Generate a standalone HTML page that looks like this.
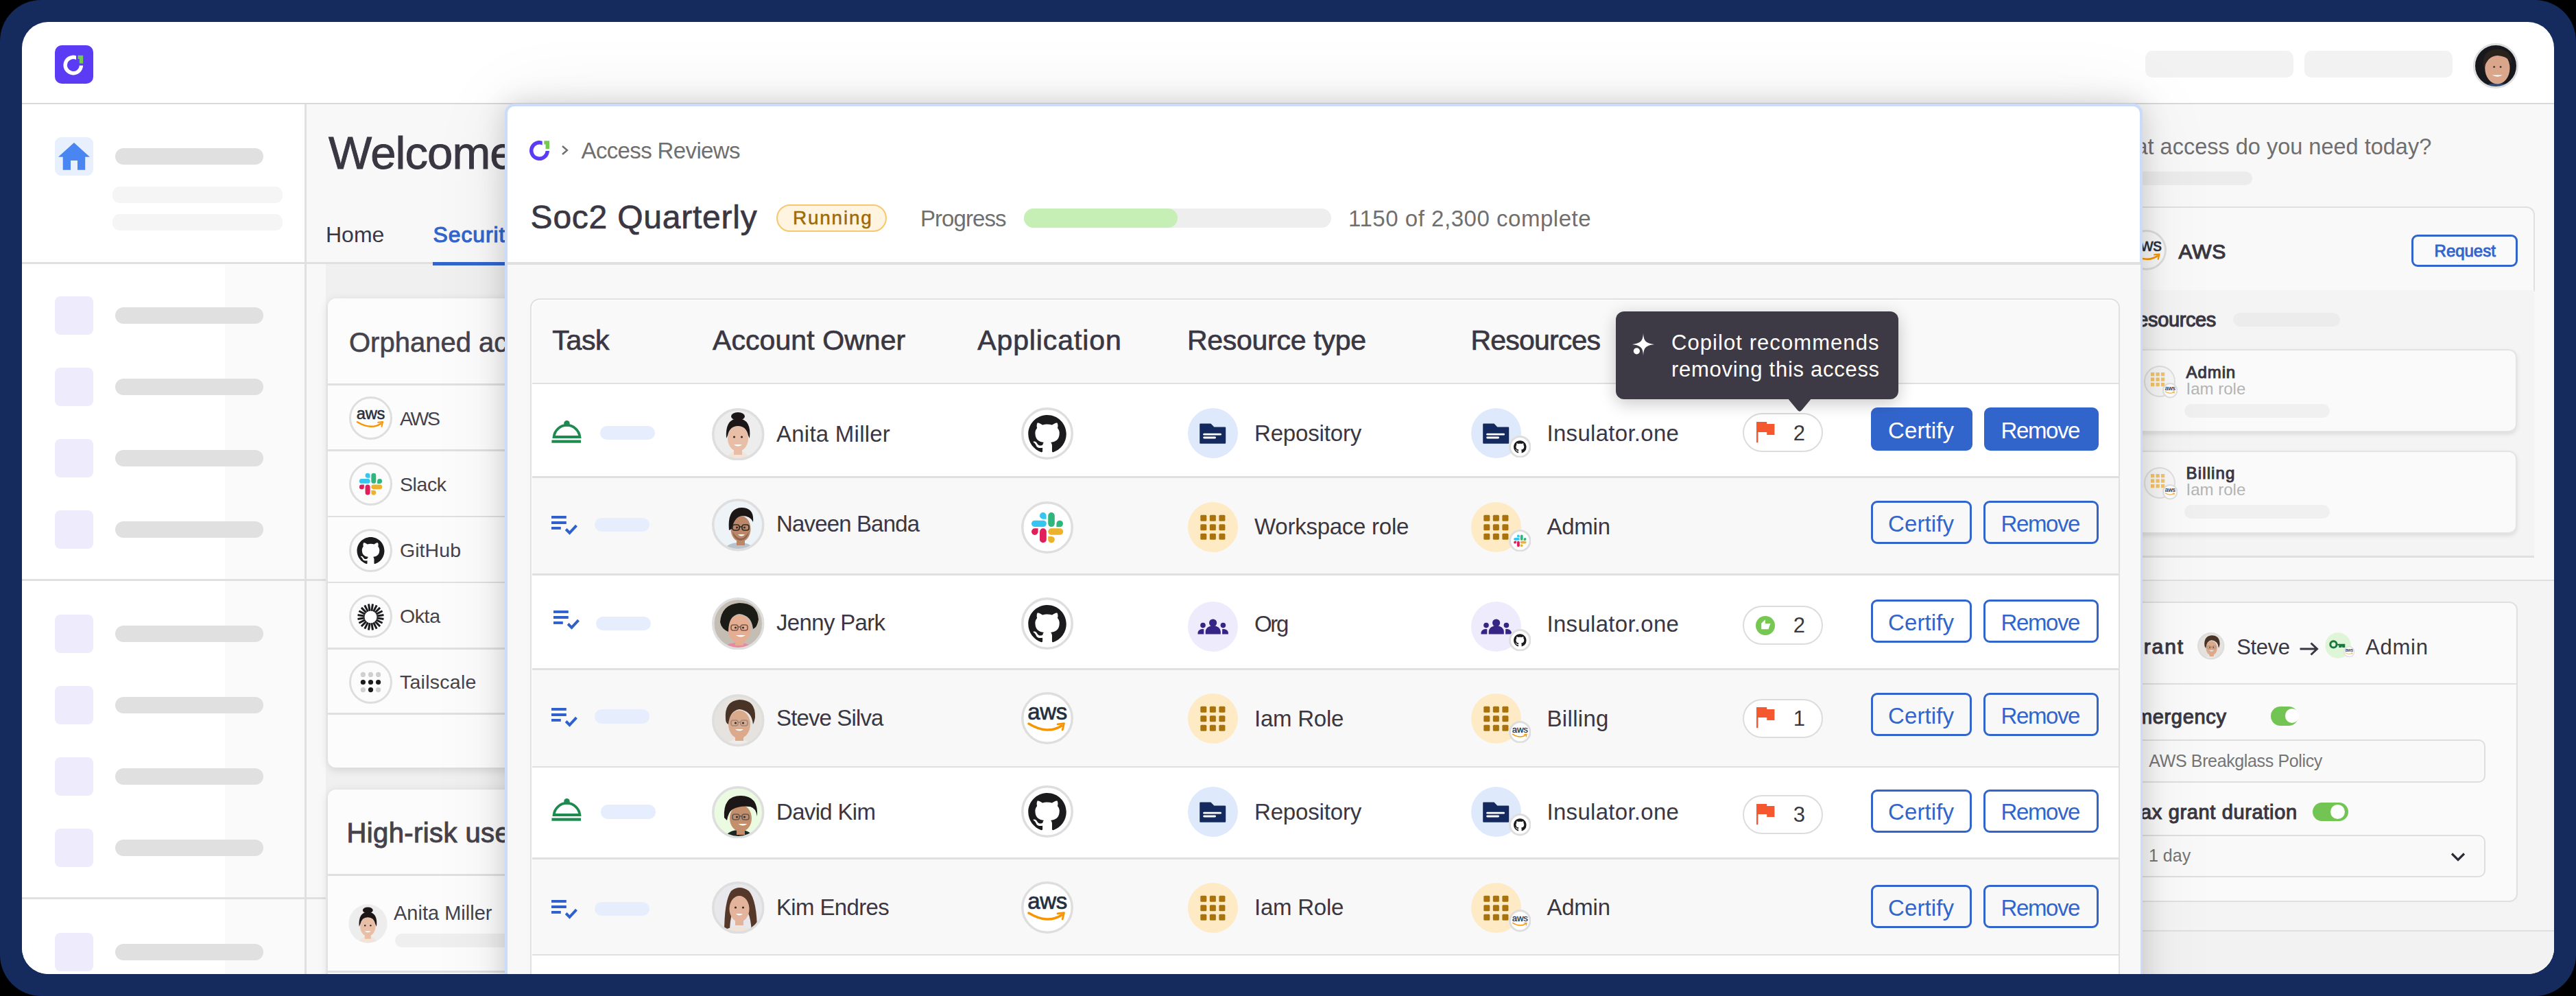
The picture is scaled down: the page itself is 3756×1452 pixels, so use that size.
<!DOCTYPE html><html><head><meta charset="utf-8"><style>
*{margin:0;padding:0;box-sizing:border-box}
html,body{width:3756px;height:1452px;overflow:hidden;background:#000}
body{position:relative;font-family:"Liberation Sans",sans-serif}
div{position:absolute}
.t{white-space:nowrap;line-height:1}
</style></head><body>
<div style="left:0;top:0;width:3756px;height:1452px;background:#152b5d;border-radius:60px"></div>
<div style="left:32px;top:32px;width:3692px;height:1388px;border-radius:38px;overflow:hidden;background:#fff"><div style="left:-32px;top:-32px;width:3756px;height:1452px">
<svg style="position:absolute;left:80.0px;top:65.5px;" width="56.0" height="56.0" viewBox="0 0 56 56"><rect x="0" y="0" width="56" height="56" rx="10" fill="#5b3bf4"/><path d="M31.00,15.23 L31.00,21.10 A8.95,8.95 0 1 0 35.73,29.60 L41.19,29.60 A14.4,14.4 0 1 1 31.00,15.23 Z" fill="#fff"/><path d="M33.6,14.8 H41.2 V26.4 H35.8 V20 H33.6 Z" fill="#74c94f"/></svg>
<div style="left:32.0px;top:149.5px;width:3692.0px;height:3.0px;background:#d9d9d9"></div>
<div style="left:3128.0px;top:74.0px;width:216.0px;height:39.0px;background:#f2f2f2;border-radius:10px"></div>
<div style="left:3360.0px;top:74.0px;width:216.0px;height:39.0px;background:#f2f2f2;border-radius:10px"></div>
<div style="left:32.0px;top:152.0px;width:413.0px;height:1268.0px;background:#fff"></div>
<div style="left:328.0px;top:386.0px;width:117.0px;height:1034.0px;background:#fafafa"></div>
<div style="left:444.0px;top:152.0px;width:3.0px;height:1268.0px;background:#e0e0e0"></div>
<div style="left:80.0px;top:200.0px;width:56.0px;height:56.0px;background:#e8effd;border-radius:9px"></div>
<svg style="position:absolute;left:80.0px;top:200.0px;" width="56.0" height="56.0" viewBox="0 0 56 56"><path d="M27.9,7.9 L50.9,28.8 H44.2 V47.7 H33 V33.9 H23 V47.7 H11.7 V28.8 H5 Z" fill="#4a86f2"/></svg>
<div style="left:168.0px;top:216.0px;width:216.0px;height:24.0px;background:#e0e0e0;border-radius:12px"></div>
<div style="left:164.0px;top:272.0px;width:248.0px;height:24.0px;background:#f5f5f5;border-radius:10px"></div>
<div style="left:164.0px;top:312.0px;width:248.0px;height:24.0px;background:#f5f5f5;border-radius:10px"></div>
<div style="left:32.0px;top:381.5px;width:413.0px;height:3.0px;background:#e0e0e0"></div>
<div style="left:80.0px;top:432.0px;width:56.0px;height:56.0px;background:#eeebfc;border-radius:8px"></div>
<div style="left:168.0px;top:448.0px;width:216.0px;height:24.0px;background:#e0e0e0;border-radius:12px"></div>
<div style="left:80.0px;top:536.0px;width:56.0px;height:56.0px;background:#eeebfc;border-radius:8px"></div>
<div style="left:168.0px;top:552.0px;width:216.0px;height:24.0px;background:#e0e0e0;border-radius:12px"></div>
<div style="left:80.0px;top:640.0px;width:56.0px;height:56.0px;background:#eeebfc;border-radius:8px"></div>
<div style="left:168.0px;top:656.0px;width:216.0px;height:24.0px;background:#e0e0e0;border-radius:12px"></div>
<div style="left:80.0px;top:744.0px;width:56.0px;height:56.0px;background:#eeebfc;border-radius:8px"></div>
<div style="left:168.0px;top:760.0px;width:216.0px;height:24.0px;background:#e0e0e0;border-radius:12px"></div>
<div style="left:80.0px;top:896.0px;width:56.0px;height:56.0px;background:#eeebfc;border-radius:8px"></div>
<div style="left:168.0px;top:912.0px;width:216.0px;height:24.0px;background:#e0e0e0;border-radius:12px"></div>
<div style="left:80.0px;top:1000.0px;width:56.0px;height:56.0px;background:#eeebfc;border-radius:8px"></div>
<div style="left:168.0px;top:1016.0px;width:216.0px;height:24.0px;background:#e0e0e0;border-radius:12px"></div>
<div style="left:80.0px;top:1104.0px;width:56.0px;height:56.0px;background:#eeebfc;border-radius:8px"></div>
<div style="left:168.0px;top:1120.0px;width:216.0px;height:24.0px;background:#e0e0e0;border-radius:12px"></div>
<div style="left:80.0px;top:1208.0px;width:56.0px;height:56.0px;background:#eeebfc;border-radius:8px"></div>
<div style="left:168.0px;top:1224.0px;width:216.0px;height:24.0px;background:#e0e0e0;border-radius:12px"></div>
<div style="left:80.0px;top:1360.0px;width:56.0px;height:56.0px;background:#eeebfc;border-radius:8px"></div>
<div style="left:168.0px;top:1376.0px;width:216.0px;height:24.0px;background:#e0e0e0;border-radius:12px"></div>
<div style="left:447.0px;top:152.0px;width:700.0px;height:231.0px;background:#f8f8f8"></div>
<div style="left:447.0px;top:383.0px;width:700.0px;height:1037.0px;background:#f0f0f0"></div>
<div style="left:447.0px;top:383.0px;width:28.0px;height:1037.0px;background:#f8f8f8"></div>
<div style="left:447.0px;top:382.0px;width:700.0px;height:3.0px;background:#e0e0e0"></div>
<div style="left:32.0px;top:844.0px;width:443.0px;height:3.0px;background:#e0e0e0"></div>
<div style="left:32.0px;top:1308.0px;width:443.0px;height:3.0px;background:#e0e0e0"></div>
<div class="t" style="left:479.0px;top:189.1px;font-size:67px;color:#3a3742;letter-spacing:-0.90px;-webkit-text-stroke:0.9px #3a3742;">Welcome</div>
<div class="t" style="left:475.0px;top:325.6px;font-size:32px;color:#3a3742;">Home</div>
<div class="t" style="left:631.5px;top:325.6px;font-size:32px;color:#3265cc;letter-spacing:0.90px;-webkit-text-stroke:1.1px #3265cc;">Security</div>
<div style="left:631.0px;top:382.0px;width:120.0px;height:4.5px;background:#3265cc"></div>
<div style="left:478.0px;top:435.0px;width:400.0px;height:684.0px;background:#fcfcfc;border-radius:12px;box-shadow:0 3px 14px rgba(0,0,0,0.13)"></div>
<div class="t" style="left:509.0px;top:478.6px;font-size:40px;color:#45424c;-webkit-text-stroke:0.6px #45424c;">Orphaned access</div>
<div style="left:478.0px;top:559.0px;width:400.0px;height:2.5px;background:#e0e0e0"></div>
<div style="left:478.0px;top:655.3px;width:400.0px;height:2.5px;background:#e0e0e0"></div>
<div style="left:478.0px;top:751.8px;width:400.0px;height:2.5px;background:#e0e0e0"></div>
<div style="left:478.0px;top:847.6px;width:400.0px;height:2.5px;background:#e0e0e0"></div>
<div style="left:478.0px;top:944.0px;width:400.0px;height:2.5px;background:#e0e0e0"></div>
<div style="left:478.0px;top:1039.3px;width:400.0px;height:2.5px;background:#e0e0e0"></div>
<svg style="position:absolute;left:508.5px;top:577.8px;" width="63.0" height="63.0" viewBox="0 0 63 63"><circle cx="31.5" cy="31.5" r="30.0" fill="#fcfcfc" stroke="#dedede" stroke-width="3"/><g transform="translate(31.50,28.98) scale(0.7200)"><text x="0" y="5" text-anchor="middle" font-family="Liberation Sans" font-size="33" fill="#232f3e" stroke="#232f3e" stroke-width="0.7" letter-spacing="-0.4">aws</text><path d="M-27,11.5 Q0,28 21,14.5" stroke="#f79400" stroke-width="3.4" fill="none" stroke-linecap="round"/><path d="M15,12.3 L24.5,11.2 L22.2,20.5" stroke="#f79400" stroke-width="2.8" fill="none" stroke-linecap="round" stroke-linejoin="round"/></g></svg>
<div class="t" style="left:583.0px;top:595.9px;font-size:28.5px;color:#45424c;letter-spacing:-2.45px;">AWS</div>
<svg style="position:absolute;left:508.5px;top:674.3px;" width="63.0" height="63.0" viewBox="0 0 63 63"><circle cx="31.5" cy="31.5" r="30.0" fill="#fcfcfc" stroke="#dedede" stroke-width="3"/><g transform="translate(14.94,15.44) scale(0.7200)"><path d="M16.8,0.4 A4.8,4.8 0 0 1 21.6,5.2 V10.0 H16.8 A4.8,4.8 0 0 1 12,5.2 A4.8,4.8 0 0 1 16.8,0.4 Z" fill="#36c5f0"/><rect x="0" y="12" width="21.8" height="9.4" rx="4.7" fill="#36c5f0"/><rect x="24.2" y="0.4" width="9.6" height="21" rx="4.8" fill="#2eb67d"/><path d="M41.199999999999996,12 A4.8,4.8 0 0 1 46.0,16.8 A4.8,4.8 0 0 1 41.199999999999996,21.6 H36.4 V16.8 A4.8,4.8 0 0 1 41.199999999999996,12 Z" fill="#2eb67d"/><path d="M4.8,23.6 H9.6 V28.400000000000002 A4.8,4.8 0 0 1 4.8,33.2 A4.8,4.8 0 0 1 0,28.400000000000002 A4.8,4.8 0 0 1 4.8,23.6 Z" fill="#e01e5a"/><rect x="12" y="23.6" width="9.8" height="21" rx="4.9" fill="#e01e5a"/><rect x="24.2" y="23.6" width="22" height="9.4" rx="4.7" fill="#ecb22e"/><path d="M24.2,35.2 H29.0 A4.8,4.8 0 0 1 33.8,40.0 A4.8,4.8 0 0 1 29.0,44.800000000000004 A4.8,4.8 0 0 1 24.2,40.0 Z" fill="#ecb22e"/></g></svg>
<div class="t" style="left:583.0px;top:691.9px;font-size:28.5px;color:#45424c;letter-spacing:-0.43px;">Slack</div>
<svg style="position:absolute;left:508.5px;top:770.5px;" width="63.0" height="63.0" viewBox="0 0 63 63"><circle cx="31.5" cy="31.5" r="30.0" fill="#fcfcfc" stroke="#dedede" stroke-width="3"/><g transform="translate(11.52,12.10) scale(2.4975)"><path d="M8 0C3.58 0 0 3.58 0 8c0 3.54 2.29 6.53 5.47 7.59.4.07.55-.17.55-.38 0-.19-.01-.82-.01-1.49-2.01.37-2.53-.49-2.69-.94-.09-.23-.48-.94-.82-1.13-.28-.15-.68-.52-.01-.53.63-.01 1.08.58 1.23.82.72 1.21 1.87.87 2.33.66.07-.52.28-.87.51-1.07-1.78-.2-3.64-.89-3.64-3.95 0-.87.31-1.59.82-2.15-.08-.2-.36-1.02.08-2.12 0 0 .67-.21 2.2.82.64-.18 1.32-.27 2-.27.68 0 1.36.09 2 .27 1.53-1.04 2.2-.82 2.2-.82.44 1.1.16 1.92.08 2.12.51.56.82 1.27.82 2.15 0 3.07-1.87 3.75-3.65 3.95.29.25.54.73.54 1.48 0 1.07-.01 1.93-.01 2.2 0 .21.15.46.55.38A8.013 8.013 0 0016 8c0-4.42-3.58-8-8-8z" fill="#1b1a1d"/></g></svg>
<div class="t" style="left:583.0px;top:788.4px;font-size:28.5px;color:#45424c;letter-spacing:0.06px;">GitHub</div>
<svg style="position:absolute;left:508.5px;top:867.1px;" width="63.0" height="63.0" viewBox="0 0 63 63"><circle cx="31.5" cy="31.5" r="30.0" fill="#fcfcfc" stroke="#dedede" stroke-width="3"/><line x1="30.17" y1="40.90" x2="28.50" y2="51.46" stroke="#1b1a1d" stroke-width="3"/><line x1="27.64" y1="40.07" x2="22.78" y2="49.61" stroke="#1b1a1d" stroke-width="3"/><line x1="25.49" y1="38.51" x2="17.92" y2="46.08" stroke="#1b1a1d" stroke-width="3"/><line x1="23.93" y1="36.36" x2="14.39" y2="41.22" stroke="#1b1a1d" stroke-width="3"/><line x1="23.10" y1="33.83" x2="12.54" y2="35.50" stroke="#1b1a1d" stroke-width="3"/><line x1="23.10" y1="31.17" x2="12.54" y2="29.50" stroke="#1b1a1d" stroke-width="3"/><line x1="23.93" y1="28.64" x2="14.39" y2="23.78" stroke="#1b1a1d" stroke-width="3"/><line x1="25.49" y1="26.49" x2="17.92" y2="18.92" stroke="#1b1a1d" stroke-width="3"/><line x1="27.64" y1="24.93" x2="22.78" y2="15.39" stroke="#1b1a1d" stroke-width="3"/><line x1="30.17" y1="24.10" x2="28.50" y2="13.54" stroke="#1b1a1d" stroke-width="3"/><line x1="32.83" y1="24.10" x2="34.50" y2="13.54" stroke="#1b1a1d" stroke-width="3"/><line x1="35.36" y1="24.93" x2="40.22" y2="15.39" stroke="#1b1a1d" stroke-width="3"/><line x1="37.51" y1="26.49" x2="45.08" y2="18.92" stroke="#1b1a1d" stroke-width="3"/><line x1="39.07" y1="28.64" x2="48.61" y2="23.78" stroke="#1b1a1d" stroke-width="3"/><line x1="39.90" y1="31.17" x2="50.46" y2="29.50" stroke="#1b1a1d" stroke-width="3"/><line x1="39.90" y1="33.83" x2="50.46" y2="35.50" stroke="#1b1a1d" stroke-width="3"/><line x1="39.07" y1="36.36" x2="48.61" y2="41.22" stroke="#1b1a1d" stroke-width="3"/><line x1="37.51" y1="38.51" x2="45.08" y2="46.08" stroke="#1b1a1d" stroke-width="3"/><line x1="35.36" y1="40.07" x2="40.22" y2="49.61" stroke="#1b1a1d" stroke-width="3"/><line x1="32.83" y1="40.90" x2="34.50" y2="51.46" stroke="#1b1a1d" stroke-width="3"/><circle cx="31.5" cy="32.5" r="9" fill="#fff"/></svg>
<div class="t" style="left:583.0px;top:883.6px;font-size:28.5px;color:#45424c;letter-spacing:-0.40px;">Okta</div>
<svg style="position:absolute;left:508.5px;top:962.6px;" width="63.0" height="63.0" viewBox="0 0 63 63"><circle cx="31.5" cy="31.5" r="30.0" fill="#fcfcfc" stroke="#dedede" stroke-width="3"/><circle cx="20.40" cy="20.40" r="3.6" fill="#cfcfcf"/><circle cx="31.50" cy="20.40" r="3.6" fill="#cfcfcf"/><circle cx="42.60" cy="20.40" r="3.6" fill="#cfcfcf"/><circle cx="20.40" cy="31.50" r="3.6" fill="#1b1a1d"/><circle cx="31.50" cy="31.50" r="3.6" fill="#1b1a1d"/><circle cx="42.60" cy="31.50" r="3.6" fill="#1b1a1d"/><circle cx="20.40" cy="42.60" r="3.6" fill="#cfcfcf"/><circle cx="31.50" cy="42.60" r="3.6" fill="#1b1a1d"/><circle cx="42.60" cy="42.60" r="3.6" fill="#cfcfcf"/></svg>
<div class="t" style="left:583.0px;top:979.9px;font-size:28.5px;color:#45424c;letter-spacing:0.26px;">Tailscale</div>
<div style="left:478.0px;top:1151.0px;width:400.0px;height:300.0px;background:#fcfcfc;border-radius:12px;box-shadow:0 3px 14px rgba(0,0,0,0.13)"></div>
<div class="t" style="left:505.5px;top:1193.6px;font-size:40px;color:#45424c;letter-spacing:0.40px;-webkit-text-stroke:1.0px #45424c;">High-risk users</div>
<div style="left:478.0px;top:1274.0px;width:400.0px;height:2.5px;background:#e0e0e0"></div>
<div style="left:576.0px;top:1361.0px;width:300.0px;height:20.0px;background:#efefef;border-radius:10px"></div>
<div class="t" style="left:574.0px;top:1316.5px;font-size:29px;color:#45424c;">Anita Miller</div>
<div style="left:478.0px;top:1415.0px;width:400.0px;height:2.5px;background:#e0e0e0"></div>
<div style="left:3100.0px;top:152.0px;width:624.0px;height:1268.0px;background:#f8f8f8"></div>
<div class="t" style="left:3064.7px;top:198.3px;font-size:32.5px;color:#6f6f6f;">What access do you need today?</div>
<div style="left:3050.0px;top:250.0px;width:234.0px;height:20.0px;background:#ececec;border-radius:10px"></div>
<div style="left:3050.0px;top:300.5px;width:645.5px;height:124.0px;background:#f9f9f9;border:2.5px solid #e0e0e0;border-radius:0 12px 0 0"></div>
<svg style="position:absolute;left:3099.5px;top:334.5px;" width="59.0" height="59.0" viewBox="0 0 59 59"><circle cx="29.5" cy="29.5" r="28.0" fill="#f9f9f9" stroke="#dedede" stroke-width="3"/><g transform="translate(29.50,26.78) scale(0.7763)"><text x="0" y="5" text-anchor="middle" font-family="Liberation Sans" font-size="33" fill="#232f3e" stroke="#232f3e" stroke-width="0.7" letter-spacing="-0.4">aws</text><path d="M-27,11.5 Q0,28 21,14.5" stroke="#f79400" stroke-width="3.4" fill="none" stroke-linecap="round"/><path d="M15,12.3 L24.5,11.2 L22.2,20.5" stroke="#f79400" stroke-width="2.8" fill="none" stroke-linecap="round" stroke-linejoin="round"/></g></svg>
<div class="t" style="left:3176.6px;top:352.2px;font-size:30px;color:#3a3742;letter-spacing:0.75px;-webkit-text-stroke:1.2px #3a3742;">AWS</div>
<div style="left:3516.4px;top:342.2px;width:155.0px;height:47.0px;border:3px solid #3265cc;border-radius:9px;background:#fafafa"></div>
<div class="t" style="left:3549.6px;top:353.7px;font-size:24px;color:#3265cc;letter-spacing:-0.03px;-webkit-text-stroke:0.9px #3265cc;">Request</div>
<div style="left:3050.0px;top:423.0px;width:644.5px;height:388.0px;background:#f4f4f4"></div>
<div class="t" style="left:3095.8px;top:452.0px;font-size:29px;color:#3a3742;letter-spacing:-0.40px;-webkit-text-stroke:1.1px #3a3742;">Resources</div>
<div style="left:3256.0px;top:456.2px;width:155.6px;height:20.0px;background:#ececec;border-radius:10px"></div>
<div style="left:3050.0px;top:509.3px;width:620.0px;height:121.0px;background:#fafafa;border:2px solid #e4e4e4;border-radius:12px;box-shadow:0 3px 6px rgba(0,0,0,0.10)"></div>
<svg style="position:absolute;left:3125.7px;top:532.7px;" width="46.0" height="46.0" viewBox="0 0 46 46"><circle cx="23" cy="23" r="22" fill="#f7f7f7" stroke="#e0e0e0" stroke-width="2"/><rect x="10.0" y="10.0" width="5.2" height="5.2" fill="#f5c46b"/><rect x="10.0" y="17.5" width="5.2" height="5.2" fill="#f5c46b"/><rect x="10.0" y="25.0" width="5.2" height="5.2" fill="#f5c46b"/><rect x="17.5" y="10.0" width="5.2" height="5.2" fill="#f5c46b"/><rect x="17.5" y="17.5" width="5.2" height="5.2" fill="#f5c46b"/><rect x="17.5" y="25.0" width="5.2" height="5.2" fill="#f5c46b"/><rect x="25.0" y="10.0" width="5.2" height="5.2" fill="#f5c46b"/><rect x="25.0" y="17.5" width="5.2" height="5.2" fill="#f5c46b"/><rect x="25.0" y="25.0" width="5.2" height="5.2" fill="#f5c46b"/></svg>
<svg style="position:absolute;left:3153.0px;top:558.3px;" width="22.4" height="22.4" viewBox="0 0 22.4 22.4"><circle cx="11.2" cy="11.2" r="10.2" fill="#fff" stroke="#e0e0e0" stroke-width="2"/><g transform="translate(11.20,10.00) scale(0.2600)"><text x="0" y="5" text-anchor="middle" font-family="Liberation Sans" font-size="33" fill="#232f3e" stroke="#232f3e" stroke-width="0.7" letter-spacing="-0.4">aws</text><path d="M-27,11.5 Q0,28 21,14.5" stroke="#f79400" stroke-width="3.4" fill="none" stroke-linecap="round"/><path d="M15,12.3 L24.5,11.2 L22.2,20.5" stroke="#f79400" stroke-width="2.8" fill="none" stroke-linecap="round" stroke-linejoin="round"/></g></svg>
<div class="t" style="left:3187.6px;top:530.9px;font-size:24px;color:#3a3742;letter-spacing:0.90px;-webkit-text-stroke:1.0px #3a3742;">Admin</div>
<div class="t" style="left:3187.6px;top:555.2px;font-size:24px;color:#b4b4b4;">Iam role</div>
<div style="left:3185.4px;top:588.8px;width:212.0px;height:20.0px;background:#f0f0f0;border-radius:10px"></div>
<div style="left:3050.0px;top:657.3px;width:620.0px;height:121.0px;background:#fafafa;border:2px solid #e4e4e4;border-radius:12px;box-shadow:0 3px 6px rgba(0,0,0,0.10)"></div>
<svg style="position:absolute;left:3125.7px;top:680.7px;" width="46.0" height="46.0" viewBox="0 0 46 46"><circle cx="23" cy="23" r="22" fill="#f7f7f7" stroke="#e0e0e0" stroke-width="2"/><rect x="10.0" y="10.0" width="5.2" height="5.2" fill="#f5c46b"/><rect x="10.0" y="17.5" width="5.2" height="5.2" fill="#f5c46b"/><rect x="10.0" y="25.0" width="5.2" height="5.2" fill="#f5c46b"/><rect x="17.5" y="10.0" width="5.2" height="5.2" fill="#f5c46b"/><rect x="17.5" y="17.5" width="5.2" height="5.2" fill="#f5c46b"/><rect x="17.5" y="25.0" width="5.2" height="5.2" fill="#f5c46b"/><rect x="25.0" y="10.0" width="5.2" height="5.2" fill="#f5c46b"/><rect x="25.0" y="17.5" width="5.2" height="5.2" fill="#f5c46b"/><rect x="25.0" y="25.0" width="5.2" height="5.2" fill="#f5c46b"/></svg>
<svg style="position:absolute;left:3153.0px;top:706.3px;" width="22.4" height="22.4" viewBox="0 0 22.4 22.4"><circle cx="11.2" cy="11.2" r="10.2" fill="#fff" stroke="#e0e0e0" stroke-width="2"/><g transform="translate(11.20,10.00) scale(0.2600)"><text x="0" y="5" text-anchor="middle" font-family="Liberation Sans" font-size="33" fill="#232f3e" stroke="#232f3e" stroke-width="0.7" letter-spacing="-0.4">aws</text><path d="M-27,11.5 Q0,28 21,14.5" stroke="#f79400" stroke-width="3.4" fill="none" stroke-linecap="round"/><path d="M15,12.3 L24.5,11.2 L22.2,20.5" stroke="#f79400" stroke-width="2.8" fill="none" stroke-linecap="round" stroke-linejoin="round"/></g></svg>
<div class="t" style="left:3187.6px;top:678.1px;font-size:24px;color:#3a3742;letter-spacing:1.12px;-webkit-text-stroke:1.0px #3a3742;">Billing</div>
<div class="t" style="left:3187.6px;top:702.4px;font-size:24px;color:#b4b4b4;">Iam role</div>
<div style="left:3185.4px;top:736.0px;width:212.0px;height:20.0px;background:#f0f0f0;border-radius:10px"></div>
<div style="left:3050.0px;top:810.0px;width:644.5px;height:2.5px;background:#e0e0e0"></div>
<div style="left:3050.0px;top:844.5px;width:674.0px;height:2.5px;background:#e0e0e0"></div>
<div style="left:3050.0px;top:847.0px;width:674.0px;height:510.0px;background:#f4f4f4"></div>
<div style="left:3050.0px;top:877.0px;width:621.0px;height:438.0px;background:#fafafa;border:2.5px solid #e0e0e0;border-radius:12px"></div>
<div class="t" style="left:3100.6px;top:928.1px;font-size:30px;color:#3a3742;letter-spacing:1.85px;-webkit-text-stroke:1.1px #3a3742;">Grant</div>
<svg style="position:absolute;left:3204.2px;top:922.0px;" width="39.5" height="39.5" viewBox="0 0 39.5 39.5"><defs><clipPath id="av3224941steve"><circle cx="19.75" cy="19.75" r="17.95"/></clipPath><filter id="fav3224941steve" x="-10%" y="-10%" width="120%" height="120%"><feGaussianBlur stdDeviation="0.36"/></filter></defs><g clip-path="url(#av3224941steve)"><rect width="39.5" height="39.5" fill="#e6e3df"/><g transform="scale(0.5163)" filter="url(#fav3224941steve)"><path d="M16,80 Q22,66 39,66 Q56,66 62,80 Z" fill="#f0ebe6"/><rect x="34" y="52" width="12" height="16" fill="#dba98b"/><ellipse cx="40" cy="44" rx="16" ry="20.5" fill="#dba98b"/><path d="M20,36 Q18,10 40,8 Q64,8 63,34 Q62,40 60,44 Q58,24 40,22 Q26,24 24,44 Q20,42 20,36 Z" fill="#4a3326"/><circle cx="34.5" cy="42" r="1.6" fill="#3a2a25"/><circle cx="45.5" cy="42" r="1.6" fill="#3a2a25"/><g fill="none" stroke="#9a8a80" stroke-width="1.6"><rect x="28" y="38" width="10" height="8" rx="3"/><rect x="42" y="38" width="10" height="8" rx="3"/><path d="M38,41 H42"/></g><path d="M34,51 Q40,56 46,51 Z" fill="#fff"/></g></g><circle cx="19.75" cy="19.75" r="18.5" fill="none" stroke="#dedede" stroke-width="2.5"/></svg>
<div class="t" style="left:3261.2px;top:927.7px;font-size:31px;color:#3a3742;letter-spacing:-0.37px;">Steve</div>
<svg style="position:absolute;left:3352.0px;top:934.0px;" width="30.0" height="24.0" viewBox="0 0 30 24"><path d="M1.5,12 H26 M17.5,3.5 L26.5,12 L17.5,20.5" stroke="#3a3742" stroke-width="3" fill="none"/></svg>
<svg style="position:absolute;left:3390.0px;top:921.5px;" width="38.0" height="38.0" viewBox="0 0 38 38"><circle cx="19" cy="19" r="18.7" fill="#dff5d7"/><circle cx="12.4" cy="17.4" r="4.6" fill="none" stroke="#167a3e" stroke-width="3"/><path d="M16.5,17.4 H28.5 V21.2 H26 V19.8 H23.5 V21.2 H21 V19.8" fill="#167a3e" stroke="#167a3e" stroke-width="1.5"/></svg>
<svg style="position:absolute;left:3417.4px;top:942.0px;" width="16.4" height="16.4" viewBox="0 0 16.4 16.4"><circle cx="8.2" cy="8.2" r="7.4" fill="#fff" stroke="#e0e0e0" stroke-width="1.5"/><g transform="translate(8.20,7.40) scale(0.2000)"><text x="0" y="5" text-anchor="middle" font-family="Liberation Sans" font-size="33" fill="#232f3e" stroke="#232f3e" stroke-width="0.7" letter-spacing="-0.4">aws</text><path d="M-27,11.5 Q0,28 21,14.5" stroke="#f79400" stroke-width="3.4" fill="none" stroke-linecap="round"/><path d="M15,12.3 L24.5,11.2 L22.2,20.5" stroke="#f79400" stroke-width="2.8" fill="none" stroke-linecap="round" stroke-linejoin="round"/></g></svg>
<div class="t" style="left:3449.0px;top:927.7px;font-size:31px;color:#3a3742;letter-spacing:0.77px;">Admin</div>
<div style="left:3050.0px;top:995.6px;width:621.0px;height:2.5px;background:#e0e0e0"></div>
<div class="t" style="left:3093.9px;top:1030.5px;font-size:29px;color:#3a3742;letter-spacing:0.67px;-webkit-text-stroke:1.1px #3a3742;">Emergency</div>
<div style="left:3310.9px;top:1029.5px;width:40.2px;height:28.7px;background:#72c553;border-radius:15px"></div>
<div style="left:3331.5px;top:1033.4px;width:20.5px;height:20.5px;background:#fff;border-radius:50%"></div>
<div style="left:3050.0px;top:1078.1px;width:573.7px;height:63.2px;background:#f9f9f9;border:2px solid #dedede;border-radius:10px"></div>
<div class="t" style="left:3133.3px;top:1097.1px;font-size:25px;color:#757575;letter-spacing:-0.36px;">AWS Breakglass Policy</div>
<div class="t" style="left:3096.2px;top:1169.8px;font-size:29px;color:#3a3742;letter-spacing:0.65px;-webkit-text-stroke:1.1px #3a3742;">Max grant duration</div>
<div style="left:3371.9px;top:1170.0px;width:52.1px;height:27.4px;background:#72c553;border-radius:14px"></div>
<div style="left:3397.5px;top:1173.4px;width:21.0px;height:21.0px;background:#fff;border-radius:50%"></div>
<div style="left:3050.0px;top:1217.3px;width:573.7px;height:62.0px;background:#f9f9f9;border:2px solid #dedede;border-radius:10px"></div>
<div class="t" style="left:3133.0px;top:1235.0px;font-size:25px;color:#757575;">1 day</div>
<svg style="position:absolute;left:3572.0px;top:1241.0px;" width="24.0" height="16.0" viewBox="0 0 24 16"><path d="M3,3.5 L12,12.5 L21,3.5" stroke="#2e2b36" stroke-width="3.2" fill="none"/></svg>
<div style="left:3050.0px;top:1355.5px;width:674.0px;height:2.5px;background:#e0e0e0"></div>
<div style="left:3050.0px;top:1358.0px;width:674.0px;height:70.0px;background:#f2f2f2"></div>
<svg style="position:absolute;left:3606.2px;top:63.0px;" width="66.0" height="66.0" viewBox="0 0 66 66"><defs><clipPath id="av363996man"><circle cx="33.0" cy="33.0" r="30.9"/></clipPath><filter id="fav363996man" x="-10%" y="-10%" width="120%" height="120%"><feGaussianBlur stdDeviation="0.60"/></filter></defs><g clip-path="url(#av363996man)"><rect width="66" height="66" fill="#17191c"/><g transform="scale(0.8627)" filter="url(#fav363996man)"><path d="M14,82 Q18,66 40,68 Q62,66 66,82 Z" fill="#2f4a6e"/><rect x="35" y="50" width="12" height="16" fill="#d9a68b"/><ellipse cx="41" cy="42" rx="21" ry="27" fill="#d9a68b"/><path d="M17,38 Q16,10 41,10 Q66,10 65,36 Q60,22 41,21 Q24,22 19,42 Z" fill="#2b211d"/><circle cx="35.5" cy="40" r="1.6" fill="#3a2a25"/><circle cx="46.5" cy="40" r="1.6" fill="#3a2a25"/><path d="M32,54 Q41,59 50,54 Z" fill="#fff"/></g></g><circle cx="33.0" cy="33.0" r="31.5" fill="none" stroke="#dedede" stroke-width="3"/></svg>
<svg style="position:absolute;left:507.5px;top:1317.9px;" width="57.0" height="57.0" viewBox="0 0 57 57"><defs><clipPath id="av5361346anita"><circle cx="28.5" cy="28.5" r="28.2"/></clipPath><filter id="fav5361346anita" x="-10%" y="-10%" width="120%" height="120%"><feGaussianBlur stdDeviation="0.52"/></filter></defs><g clip-path="url(#av5361346anita)"><rect width="57" height="57" fill="#ededed"/><g transform="scale(0.7451)" filter="url(#fav5361346anita)"><path d="M18,80 Q22,64 38,62 Q54,64 58,80 Z" fill="#f3e4da"/><rect x="32" y="52" width="12" height="16" fill="#e8bfa6"/><ellipse cx="38" cy="44" rx="15" ry="19" fill="#e8bfa6"/><path d="M21,44 Q19,16 38,15 Q58,16 55,44 L53,40 Q50,26 38,26 Q26,26 23,40 Z" fill="#1e1918"/><ellipse cx="38" cy="12" rx="10" ry="6" fill="#1e1918"/><circle cx="32.5" cy="42" r="1.6" fill="#3a2a25"/><circle cx="43.5" cy="42" r="1.6" fill="#3a2a25"/><path d="M32,53 Q38,58 44,53 Z" fill="#fff"/></g></g></svg>
<!--modal-->
<div style="left:735.8px;top:151.0px;width:2388.7px;height:1400.0px;background:#fff;border:4px solid #cbdcfb;border-radius:14px;box-shadow:0 0 40px rgba(0,0,0,0.17),0 0 120px rgba(0,0,0,0.07)"></div>
<svg style="position:absolute;left:772.0px;top:205.0px;" width="29.0" height="29.0" viewBox="12.4 14.6 28.8 28.8"><path d="M31.00,15.23 L31.00,21.10 A8.95,8.95 0 1 0 35.73,29.60 L41.19,29.60 A14.4,14.4 0 1 1 31.00,15.23 Z" fill="#5b3bf4"/><path d="M33.6,14.8 H41.2 V26.4 H35.8 V20 H33.6 Z" fill="#74c94f"/></svg>
<svg style="position:absolute;left:816.0px;top:210.0px;" width="16.0" height="18.0" viewBox="0 0 16 18"><path d="M4,3 L11,9 L4,15" stroke="#6f6f6f" stroke-width="2.4" fill="none"/></svg>
<div class="t" style="left:847.5px;top:202.8px;font-size:33px;color:#6f6f6f;letter-spacing:-0.63px;">Access Reviews</div>
<div class="t" style="left:773.6px;top:293.4px;font-size:48px;color:#3a3742;letter-spacing:0.77px;-webkit-text-stroke:0.7px #3a3742;">Soc2 Quarterly</div>
<div style="left:1132.0px;top:298.0px;width:160.5px;height:40.0px;background:#fff4e0;border:2.5px solid #f6c76c;border-radius:20px"></div>
<div class="t" style="left:1155.9px;top:304.3px;font-size:28px;color:#9c6b07;letter-spacing:1.77px;-webkit-text-stroke:0.5px #9c6b07;">Running</div>
<div class="t" style="left:1342.0px;top:302.1px;font-size:33px;color:#6f6f6f;letter-spacing:-0.94px;">Progress</div>
<div style="left:1493.0px;top:303.5px;width:447.5px;height:28.2px;background:#eeeeee;border-radius:14px"></div>
<div style="left:1493.0px;top:303.5px;width:223.7px;height:28.2px;background:#c6efb6;border-radius:14px"></div>
<div class="t" style="left:1966.0px;top:302.1px;font-size:33px;color:#6f6f6f;letter-spacing:0.53px;">1150 of 2,300 complete</div>
<div style="left:740.0px;top:382.0px;width:2381.0px;height:4.0px;background:#e0e0e0"></div>
<div style="left:740.0px;top:386.0px;width:2381.0px;height:1100.0px;background:#f8f8f8"></div>
<div style="left:773.0px;top:435.0px;width:2318.0px;height:1100.0px;background:#fff;border:2.5px solid #e0e0e0;border-radius:14px;overflow:hidden"></div>
<div style="left:775.5px;top:437.5px;width:2313.0px;height:121.0px;background:#f9f9fa;border-radius:12px 12px 0 0"></div>
<div class="t" style="left:805.2px;top:475.9px;font-size:41px;color:#3a3742;letter-spacing:-0.30px;-webkit-text-stroke:0.7px #3a3742;">Task</div>
<div class="t" style="left:1039.0px;top:475.9px;font-size:41px;color:#3a3742;letter-spacing:0.08px;-webkit-text-stroke:0.7px #3a3742;">Account Owner</div>
<div class="t" style="left:1425.2px;top:475.9px;font-size:41px;color:#3a3742;letter-spacing:0.90px;-webkit-text-stroke:0.7px #3a3742;">Application</div>
<div class="t" style="left:1731.0px;top:475.9px;font-size:41px;color:#3a3742;letter-spacing:-0.28px;-webkit-text-stroke:0.7px #3a3742;">Resource type</div>
<div class="t" style="left:2144.5px;top:475.9px;font-size:41px;color:#3a3742;letter-spacing:-0.81px;-webkit-text-stroke:0.7px #3a3742;">Resources</div>
<div style="left:775.5px;top:559.2px;width:2313.0px;height:136.5px;background:#fff"></div>
<div style="left:775.5px;top:695.7px;width:2313.0px;height:142.0px;background:#f8f8f8"></div>
<div style="left:775.5px;top:837.7px;width:2313.0px;height:138.0px;background:#fff"></div>
<div style="left:775.5px;top:975.7px;width:2313.0px;height:142.5px;background:#f8f8f8"></div>
<div style="left:775.5px;top:1118.2px;width:2313.0px;height:133.5px;background:#fff"></div>
<div style="left:775.5px;top:1251.7px;width:2313.0px;height:140.5px;background:#f8f8f8"></div>
<div style="left:775.5px;top:1392.0px;width:2313.0px;height:200.0px;background:#fff"></div>
<div style="left:775.5px;top:557.7px;width:2313.0px;height:2.5px;background:#e0e0e0"></div>
<div style="left:775.5px;top:694.2px;width:2313.0px;height:2.5px;background:#e0e0e0"></div>
<div style="left:775.5px;top:836.2px;width:2313.0px;height:2.5px;background:#e0e0e0"></div>
<div style="left:775.5px;top:974.2px;width:2313.0px;height:2.5px;background:#e0e0e0"></div>
<div style="left:775.5px;top:1116.7px;width:2313.0px;height:2.5px;background:#e0e0e0"></div>
<div style="left:775.5px;top:1250.2px;width:2313.0px;height:2.5px;background:#e0e0e0"></div>
<div style="left:775.5px;top:1390.7px;width:2313.0px;height:2.5px;background:#e0e0e0"></div>
<svg style="position:absolute;left:804.0px;top:612.7px;" width="44.0" height="34.0" viewBox="0 0 44 34"><path d="M3.6,24 A19,19 0 0 1 41.4,24 Z" fill="none" stroke="#1e8a50" stroke-width="3.8" stroke-linejoin="miter"/><circle cx="22.5" cy="4.3" r="4.2" fill="#1e8a50"/><rect x="0.4" y="28.5" width="42.6" height="4.2" fill="#1e8a50"/></svg>
<div style="left:875.0px;top:620.5px;width:80.0px;height:20.5px;background:#e6edfc;border-radius:10px"></div>
<svg style="position:absolute;left:1038.2px;top:594.5px;" width="76.5" height="76.5" viewBox="0 0 76.5 76.5"><defs><clipPath id="av1076632anita"><circle cx="38.25" cy="38.25" r="35.85"/></clipPath><filter id="fav1076632anita" x="-10%" y="-10%" width="120%" height="120%"><feGaussianBlur stdDeviation="0.70"/></filter></defs><g clip-path="url(#av1076632anita)"><rect width="76.5" height="76.5" fill="#ededed"/><g transform="scale(1.0000)" filter="url(#fav1076632anita)"><path d="M18,80 Q22,64 38,62 Q54,64 58,80 Z" fill="#f3e4da"/><rect x="32" y="52" width="12" height="16" fill="#e8bfa6"/><ellipse cx="38" cy="44" rx="15" ry="19" fill="#e8bfa6"/><path d="M21,44 Q19,16 38,15 Q58,16 55,44 L53,40 Q50,26 38,26 Q26,26 23,40 Z" fill="#1e1918"/><ellipse cx="38" cy="12" rx="10" ry="6" fill="#1e1918"/><circle cx="32.5" cy="42" r="1.6" fill="#3a2a25"/><circle cx="43.5" cy="42" r="1.6" fill="#3a2a25"/><path d="M32,53 Q38,58 44,53 Z" fill="#fff"/></g></g><circle cx="38.25" cy="38.25" r="36.5" fill="none" stroke="#dedede" stroke-width="3.5"/></svg>
<div class="t" style="left:1132.0px;top:615.5px;font-size:33px;color:#3a3742;letter-spacing:0.24px;">Anita Miller</div>
<svg style="position:absolute;left:1489.2px;top:593.8px;" width="76.0" height="76.0" viewBox="0 0 76 76"><circle cx="38.0" cy="38.0" r="36.25" fill="#fff" stroke="#dedede" stroke-width="3.5"/><g transform="translate(10.25,11.05) scale(3.4688)"><path d="M8 0C3.58 0 0 3.58 0 8c0 3.54 2.29 6.53 5.47 7.59.4.07.55-.17.55-.38 0-.19-.01-.82-.01-1.49-2.01.37-2.53-.49-2.69-.94-.09-.23-.48-.94-.82-1.13-.28-.15-.68-.52-.01-.53.63-.01 1.08.58 1.23.82.72 1.21 1.87.87 2.33.66.07-.52.28-.87.51-1.07-1.78-.2-3.64-.89-3.64-3.95 0-.87.31-1.59.82-2.15-.08-.2-.36-1.02.08-2.12 0 0 .67-.21 2.2.82.64-.18 1.32-.27 2-.27.68 0 1.36.09 2 .27 1.53-1.04 2.2-.82 2.2-.82.44 1.1.16 1.92.08 2.12.51.56.82 1.27.82 2.15 0 3.07-1.87 3.75-3.65 3.95.29.25.54.73.54 1.48 0 1.07-.01 1.93-.01 2.2 0 .21.15.46.55.38A8.013 8.013 0 0016 8c0-4.42-3.58-8-8-8z" fill="#1b1a1d"/></g></svg>
<svg style="position:absolute;left:1731.5px;top:594.9px;" width="73.0" height="73.0" viewBox="0 0 73 73"><circle cx="36.5" cy="36.5" r="36.5" fill="#dfe9fc"/><path d="M18.2,23.4 H33 L37.8,28.4 H54.2 V50.7 H18.2 Z" fill="#142a5e" stroke="#142a5e" stroke-width="2" stroke-linejoin="round"/><rect x="22.2" y="36.8" width="26.8" height="2.8" rx="1.4" fill="#fff"/><rect x="22.2" y="41.6" width="18.8" height="2.8" rx="1.4" fill="#fff"/></svg>
<div class="t" style="left:1829.0px;top:614.5px;font-size:33px;color:#3a3742;letter-spacing:-0.16px;">Repository</div>
<svg style="position:absolute;left:2145.0px;top:594.9px;" width="73.0" height="73.0" viewBox="0 0 73 73"><circle cx="36.5" cy="36.5" r="36.5" fill="#dfe9fc"/><path d="M18.2,23.4 H33 L37.8,28.4 H54.2 V50.7 H18.2 Z" fill="#142a5e" stroke="#142a5e" stroke-width="2" stroke-linejoin="round"/><rect x="22.2" y="36.8" width="26.8" height="2.8" rx="1.4" fill="#fff"/><rect x="22.2" y="41.6" width="18.8" height="2.8" rx="1.4" fill="#fff"/></svg>
<svg style="position:absolute;left:2199.5px;top:634.6px;" width="32.6" height="32.6" viewBox="0 0 32.6 32.6"><circle cx="16.3" cy="16.3" r="14.8" fill="#fff" stroke="#dedede" stroke-width="3"/><g transform="translate(7.05,7.35) scale(1.1562)"><path d="M8 0C3.58 0 0 3.58 0 8c0 3.54 2.29 6.53 5.47 7.59.4.07.55-.17.55-.38 0-.19-.01-.82-.01-1.49-2.01.37-2.53-.49-2.69-.94-.09-.23-.48-.94-.82-1.13-.28-.15-.68-.52-.01-.53.63-.01 1.08.58 1.23.82.72 1.21 1.87.87 2.33.66.07-.52.28-.87.51-1.07-1.78-.2-3.64-.89-3.64-3.95 0-.87.31-1.59.82-2.15-.08-.2-.36-1.02.08-2.12 0 0 .67-.21 2.2.82.64-.18 1.32-.27 2-.27.68 0 1.36.09 2 .27 1.53-1.04 2.2-.82 2.2-.82.44 1.1.16 1.92.08 2.12.51.56.82 1.27.82 2.15 0 3.07-1.87 3.75-3.65 3.95.29.25.54.73.54 1.48 0 1.07-.01 1.93-.01 2.2 0 .21.15.46.55.38A8.013 8.013 0 0016 8c0-4.42-3.58-8-8-8z" fill="#1b1a1d"/></g></svg>
<div class="t" style="left:2255.5px;top:614.5px;font-size:33px;color:#3a3742;letter-spacing:0.29px;">Insulator.one</div>
<div style="left:2540.9px;top:602.3px;width:117.0px;height:57.0px;background:#fff;border:2.5px solid #dcdcdc;border-radius:29px"></div>
<svg style="position:absolute;left:2560.6px;top:615.0px;" width="28.0" height="31.0" viewBox="0 0 28 31"><rect x="0" y="0" width="2.4" height="30.2" fill="#f5572f"/><path d="M0,0 H15.2 V3.1 H26.4 V19 H15.2 V15 H0 Z" fill="#f5572f"/></svg>
<div class="t" style="left:2614.7px;top:615.8px;font-size:31px;color:#3a3742;">2</div>
<div style="left:2728.0px;top:594.0px;width:148.0px;height:63.0px;background:#3265cc;border-radius:9px"></div>
<div style="left:2892.5px;top:594.0px;width:167.0px;height:63.0px;background:#3265cc;border-radius:9px"></div>
<div class="t" style="left:2753.0px;top:610.5px;font-size:33px;color:#fff;letter-spacing:0.12px;">Certify</div>
<div class="t" style="left:2917.5px;top:610.5px;font-size:33px;color:#fff;letter-spacing:-1.40px;">Remove</div>
<svg style="position:absolute;left:804.0px;top:752.0px;" width="44.0" height="32.0" viewBox="0 0 44 32"><rect x="0" y="0" width="21.8" height="3.9" fill="#3060cc"/><rect x="0" y="8" width="21.8" height="4" fill="#3060cc"/><rect x="0" y="16" width="13.8" height="3.9" fill="#3060cc"/><path d="M21.2,19.5 L26.5,24.8 L36.5,14.2" fill="none" stroke="#3060cc" stroke-width="4"/></svg>
<div style="left:867.0px;top:754.5px;width:80.0px;height:20.5px;background:#e6edfc;border-radius:10px"></div>
<svg style="position:absolute;left:1038.2px;top:727.0px;" width="76.5" height="76.5" viewBox="0 0 76.5 76.5"><defs><clipPath id="av1076765naveen"><circle cx="38.25" cy="38.25" r="35.85"/></clipPath><filter id="fav1076765naveen" x="-10%" y="-10%" width="120%" height="120%"><feGaussianBlur stdDeviation="0.70"/></filter></defs><g clip-path="url(#av1076765naveen)"><rect width="76.5" height="76.5" fill="#eef3f7"/><g transform="scale(1.0000)" filter="url(#fav1076765naveen)"><path d="M14,80 Q20,64 40,64 Q60,64 66,80 Z" fill="#b9c3cc"/><rect x="36" y="52" width="12" height="16" fill="#bb8767"/><ellipse cx="42" cy="44" rx="14.5" ry="19" fill="#bb8767"/><path d="M30,48 Q42,68 54,48 Q52,60 42,61 Q32,60 30,48 Z" fill="#6b4a3a" opacity="0.55"/><path d="M25,46 Q22,14 43,13 Q62,13 60,34 Q56,25 44,25 Q33,26 29,44 Z" fill="#1b1918"/><circle cx="36.5" cy="42" r="1.6" fill="#3a2a25"/><circle cx="47.5" cy="42" r="1.6" fill="#3a2a25"/><g fill="none" stroke="#2a2a2a" stroke-width="1.6"><rect x="30" y="38" width="10" height="8" rx="3"/><rect x="44" y="38" width="10" height="8" rx="3"/><path d="M40,41 H44"/></g><path d="M38,52 Q43,57 48,52 Z" fill="#fff"/></g></g><circle cx="38.25" cy="38.25" r="36.5" fill="none" stroke="#dedede" stroke-width="3.5"/></svg>
<div class="t" style="left:1132.0px;top:747.1px;font-size:33px;color:#3a3742;letter-spacing:-0.85px;">Naveen Banda</div>
<svg style="position:absolute;left:1489.2px;top:730.5px;" width="76.0" height="76.0" viewBox="0 0 76 76"><circle cx="38.0" cy="38.0" r="36.25" fill="#fff" stroke="#dedede" stroke-width="3.5"/><g transform="translate(15.00,15.70) scale(1.0000)"><path d="M16.8,0.4 A4.8,4.8 0 0 1 21.6,5.2 V10.0 H16.8 A4.8,4.8 0 0 1 12,5.2 A4.8,4.8 0 0 1 16.8,0.4 Z" fill="#36c5f0"/><rect x="0" y="12" width="21.8" height="9.4" rx="4.7" fill="#36c5f0"/><rect x="24.2" y="0.4" width="9.6" height="21" rx="4.8" fill="#2eb67d"/><path d="M41.199999999999996,12 A4.8,4.8 0 0 1 46.0,16.8 A4.8,4.8 0 0 1 41.199999999999996,21.6 H36.4 V16.8 A4.8,4.8 0 0 1 41.199999999999996,12 Z" fill="#2eb67d"/><path d="M4.8,23.6 H9.6 V28.400000000000002 A4.8,4.8 0 0 1 4.8,33.2 A4.8,4.8 0 0 1 0,28.400000000000002 A4.8,4.8 0 0 1 4.8,23.6 Z" fill="#e01e5a"/><rect x="12" y="23.6" width="9.8" height="21" rx="4.9" fill="#e01e5a"/><rect x="24.2" y="23.6" width="22" height="9.4" rx="4.7" fill="#ecb22e"/><path d="M24.2,35.2 H29.0 A4.8,4.8 0 0 1 33.8,40.0 A4.8,4.8 0 0 1 29.0,44.800000000000004 A4.8,4.8 0 0 1 24.2,40.0 Z" fill="#ecb22e"/></g></svg>
<svg style="position:absolute;left:1731.5px;top:731.9px;" width="73.0" height="73.0" viewBox="0 0 73 73"><circle cx="36.5" cy="36.5" r="36.5" fill="#feeac4"/><rect x="18.30" y="18.80" width="9" height="9" rx="1.5" fill="#a8720c"/><rect x="18.30" y="32.30" width="9" height="9" rx="1.5" fill="#a8720c"/><rect x="18.30" y="45.80" width="9" height="9" rx="1.5" fill="#a8720c"/><rect x="31.85" y="18.80" width="9" height="9" rx="1.5" fill="#a8720c"/><rect x="31.85" y="32.30" width="9" height="9" rx="1.5" fill="#a8720c"/><rect x="31.85" y="45.80" width="9" height="9" rx="1.5" fill="#a8720c"/><rect x="45.40" y="18.80" width="9" height="9" rx="1.5" fill="#a8720c"/><rect x="45.40" y="32.30" width="9" height="9" rx="1.5" fill="#a8720c"/><rect x="45.40" y="45.80" width="9" height="9" rx="1.5" fill="#a8720c"/></svg>
<div class="t" style="left:1829.0px;top:751.1px;font-size:33px;color:#3a3742;letter-spacing:-0.25px;">Workspace role</div>
<svg style="position:absolute;left:2145.0px;top:731.9px;" width="73.0" height="73.0" viewBox="0 0 73 73"><circle cx="36.5" cy="36.5" r="36.5" fill="#feeac4"/><rect x="18.30" y="18.80" width="9" height="9" rx="1.5" fill="#a8720c"/><rect x="18.30" y="32.30" width="9" height="9" rx="1.5" fill="#a8720c"/><rect x="18.30" y="45.80" width="9" height="9" rx="1.5" fill="#a8720c"/><rect x="31.85" y="18.80" width="9" height="9" rx="1.5" fill="#a8720c"/><rect x="31.85" y="32.30" width="9" height="9" rx="1.5" fill="#a8720c"/><rect x="31.85" y="45.80" width="9" height="9" rx="1.5" fill="#a8720c"/><rect x="45.40" y="18.80" width="9" height="9" rx="1.5" fill="#a8720c"/><rect x="45.40" y="32.30" width="9" height="9" rx="1.5" fill="#a8720c"/><rect x="45.40" y="45.80" width="9" height="9" rx="1.5" fill="#a8720c"/></svg>
<svg style="position:absolute;left:2199.5px;top:771.6px;" width="32.6" height="32.6" viewBox="0 0 32.6 32.6"><circle cx="16.3" cy="16.3" r="14.8" fill="#fff" stroke="#dedede" stroke-width="3"/><g transform="translate(7.10,7.30) scale(0.4000)"><path d="M16.8,0.4 A4.8,4.8 0 0 1 21.6,5.2 V10.0 H16.8 A4.8,4.8 0 0 1 12,5.2 A4.8,4.8 0 0 1 16.8,0.4 Z" fill="#36c5f0"/><rect x="0" y="12" width="21.8" height="9.4" rx="4.7" fill="#36c5f0"/><rect x="24.2" y="0.4" width="9.6" height="21" rx="4.8" fill="#2eb67d"/><path d="M41.199999999999996,12 A4.8,4.8 0 0 1 46.0,16.8 A4.8,4.8 0 0 1 41.199999999999996,21.6 H36.4 V16.8 A4.8,4.8 0 0 1 41.199999999999996,12 Z" fill="#2eb67d"/><path d="M4.8,23.6 H9.6 V28.400000000000002 A4.8,4.8 0 0 1 4.8,33.2 A4.8,4.8 0 0 1 0,28.400000000000002 A4.8,4.8 0 0 1 4.8,23.6 Z" fill="#e01e5a"/><rect x="12" y="23.6" width="9.8" height="21" rx="4.9" fill="#e01e5a"/><rect x="24.2" y="23.6" width="22" height="9.4" rx="4.7" fill="#ecb22e"/><path d="M24.2,35.2 H29.0 A4.8,4.8 0 0 1 33.8,40.0 A4.8,4.8 0 0 1 29.0,44.800000000000004 A4.8,4.8 0 0 1 24.2,40.0 Z" fill="#ecb22e"/></g></svg>
<div class="t" style="left:2255.5px;top:751.1px;font-size:33px;color:#3a3742;letter-spacing:-0.25px;">Admin</div>
<div style="left:2728.4px;top:730.4px;width:147.0px;height:63.0px;border:3px solid #3265cc;border-radius:9px"></div>
<div style="left:2892.3px;top:730.4px;width:167.4px;height:63.0px;border:3px solid #3265cc;border-radius:9px"></div>
<div class="t" style="left:2753.0px;top:746.9px;font-size:33px;color:#3265cc;letter-spacing:0.12px;">Certify</div>
<div class="t" style="left:2917.5px;top:746.9px;font-size:33px;color:#3265cc;letter-spacing:-1.40px;">Remove</div>
<svg style="position:absolute;left:807.0px;top:890.0px;" width="44.0" height="32.0" viewBox="0 0 44 32"><rect x="0" y="0" width="21.8" height="3.9" fill="#3060cc"/><rect x="0" y="8" width="21.8" height="4" fill="#3060cc"/><rect x="0" y="16" width="13.8" height="3.9" fill="#3060cc"/><path d="M21.2,19.5 L26.5,24.8 L36.5,14.2" fill="none" stroke="#3060cc" stroke-width="4"/></svg>
<div style="left:869.0px;top:898.5px;width:80.0px;height:20.5px;background:#e6edfc;border-radius:10px"></div>
<svg style="position:absolute;left:1038.2px;top:870.8px;" width="76.5" height="76.5" viewBox="0 0 76.5 76.5"><defs><clipPath id="av1076909jenny"><circle cx="38.25" cy="38.25" r="35.85"/></clipPath><filter id="fav1076909jenny" x="-10%" y="-10%" width="120%" height="120%"><feGaussianBlur stdDeviation="0.70"/></filter></defs><g clip-path="url(#av1076909jenny)"><rect width="76.5" height="76.5" fill="#c4bdb4"/><g transform="scale(1.0000)" filter="url(#fav1076909jenny)"><path d="M12,82 Q16,66 38,66 Q60,66 64,82 Z" fill="#e58aa0"/><rect x="34" y="54" width="12" height="16" fill="#e5ad92"/><ellipse cx="40" cy="46" rx="16.5" ry="20.5" fill="#e5ad92"/><path d="M12,36 Q14,10 40,8 Q66,8 68,32 Q66,44 60,46 Q58,26 40,24 Q24,26 24,50 Q14,46 12,36 Z" fill="#1f1a19"/><circle cx="34.5" cy="44" r="1.6" fill="#3a2a25"/><circle cx="45.5" cy="44" r="1.6" fill="#3a2a25"/><g fill="none" stroke="#7a5a48" stroke-width="1.6"><rect x="28" y="40" width="10" height="8" rx="3"/><rect x="42" y="40" width="10" height="8" rx="3"/><path d="M38,43 H42"/></g><path d="M35,55 Q42,60 49,55 Z" fill="#fff"/></g></g><circle cx="38.25" cy="38.25" r="36.5" fill="none" stroke="#dedede" stroke-width="3.5"/></svg>
<div class="t" style="left:1132.0px;top:890.8px;font-size:33px;color:#3a3742;letter-spacing:-0.67px;">Jenny Park</div>
<svg style="position:absolute;left:1489.2px;top:871.0px;" width="76.0" height="76.0" viewBox="0 0 76 76"><circle cx="38.0" cy="38.0" r="36.25" fill="#fff" stroke="#dedede" stroke-width="3.5"/><g transform="translate(10.25,11.05) scale(3.4688)"><path d="M8 0C3.58 0 0 3.58 0 8c0 3.54 2.29 6.53 5.47 7.59.4.07.55-.17.55-.38 0-.19-.01-.82-.01-1.49-2.01.37-2.53-.49-2.69-.94-.09-.23-.48-.94-.82-1.13-.28-.15-.68-.52-.01-.53.63-.01 1.08.58 1.23.82.72 1.21 1.87.87 2.33.66.07-.52.28-.87.51-1.07-1.78-.2-3.64-.89-3.64-3.95 0-.87.31-1.59.82-2.15-.08-.2-.36-1.02.08-2.12 0 0 .67-.21 2.2.82.64-.18 1.32-.27 2-.27.68 0 1.36.09 2 .27 1.53-1.04 2.2-.82 2.2-.82.44 1.1.16 1.92.08 2.12.51.56.82 1.27.82 2.15 0 3.07-1.87 3.75-3.65 3.95.29.25.54.73.54 1.48 0 1.07-.01 1.93-.01 2.2 0 .21.15.46.55.38A8.013 8.013 0 0016 8c0-4.42-3.58-8-8-8z" fill="#1b1a1d"/></g></svg>
<svg style="position:absolute;left:1731.5px;top:876.9px;" width="73.0" height="73.0" viewBox="0 0 73 73"><circle cx="36.5" cy="36.5" r="36.5" fill="#eeebfc"/><circle cx="36.6" cy="31" r="5.6" fill="#362585"/><path d="M25.7,47.6 V44 A11,9 0 0 1 47.8,44 V47.6 Z" fill="#362585"/><circle cx="22" cy="34.6" r="3.8" fill="#362585"/><path d="M14.5,47.6 V45 A7,5.5 0 0 1 23.3,40.2 V47.6 Z" fill="#362585"/><circle cx="51.4" cy="34.6" r="3.8" fill="#362585"/><path d="M58.9,47.6 V45 A7,5.5 0 0 0 50.1,40.2 V47.6 Z" fill="#362585"/></svg>
<div class="t" style="left:1829.0px;top:893.1px;font-size:33px;color:#3a3742;letter-spacing:-2.35px;">Org</div>
<svg style="position:absolute;left:2145.0px;top:876.9px;" width="73.0" height="73.0" viewBox="0 0 73 73"><circle cx="36.5" cy="36.5" r="36.5" fill="#eeebfc"/><circle cx="36.6" cy="31" r="5.6" fill="#362585"/><path d="M25.7,47.6 V44 A11,9 0 0 1 47.8,44 V47.6 Z" fill="#362585"/><circle cx="22" cy="34.6" r="3.8" fill="#362585"/><path d="M14.5,47.6 V45 A7,5.5 0 0 1 23.3,40.2 V47.6 Z" fill="#362585"/><circle cx="51.4" cy="34.6" r="3.8" fill="#362585"/><path d="M58.9,47.6 V45 A7,5.5 0 0 0 50.1,40.2 V47.6 Z" fill="#362585"/></svg>
<svg style="position:absolute;left:2199.5px;top:916.6px;" width="32.6" height="32.6" viewBox="0 0 32.6 32.6"><circle cx="16.3" cy="16.3" r="14.8" fill="#fff" stroke="#dedede" stroke-width="3"/><g transform="translate(7.05,7.35) scale(1.1562)"><path d="M8 0C3.58 0 0 3.58 0 8c0 3.54 2.29 6.53 5.47 7.59.4.07.55-.17.55-.38 0-.19-.01-.82-.01-1.49-2.01.37-2.53-.49-2.69-.94-.09-.23-.48-.94-.82-1.13-.28-.15-.68-.52-.01-.53.63-.01 1.08.58 1.23.82.72 1.21 1.87.87 2.33.66.07-.52.28-.87.51-1.07-1.78-.2-3.64-.89-3.64-3.95 0-.87.31-1.59.82-2.15-.08-.2-.36-1.02.08-2.12 0 0 .67-.21 2.2.82.64-.18 1.32-.27 2-.27.68 0 1.36.09 2 .27 1.53-1.04 2.2-.82 2.2-.82.44 1.1.16 1.92.08 2.12.51.56.82 1.27.82 2.15 0 3.07-1.87 3.75-3.65 3.95.29.25.54.73.54 1.48 0 1.07-.01 1.93-.01 2.2 0 .21.15.46.55.38A8.013 8.013 0 0016 8c0-4.42-3.58-8-8-8z" fill="#1b1a1d"/></g></svg>
<div class="t" style="left:2255.5px;top:893.1px;font-size:33px;color:#3a3742;letter-spacing:0.29px;">Insulator.one</div>
<div style="left:2540.9px;top:882.7px;width:117.0px;height:57.0px;background:#fff;border:2.5px solid #dcdcdc;border-radius:29px"></div>
<svg style="position:absolute;left:2560.0px;top:897.5px;" width="28.0" height="28.0" viewBox="0 0 28 28"><circle cx="14" cy="14" r="14" fill="#76c853"/><path d="M8.2,8.3 L13.8,2.8 V8.4 H21.4 L18.5,16.8 H8.2 Z" fill="#fff" transform="translate(0,2.5)"/></svg>
<div class="t" style="left:2614.7px;top:896.2px;font-size:31px;color:#3a3742;">2</div>
<div style="left:2728.4px;top:874.4px;width:147.0px;height:63.0px;border:3px solid #3265cc;border-radius:9px"></div>
<div style="left:2892.3px;top:874.4px;width:167.4px;height:63.0px;border:3px solid #3265cc;border-radius:9px"></div>
<div class="t" style="left:2753.0px;top:890.9px;font-size:33px;color:#3265cc;letter-spacing:0.12px;">Certify</div>
<div class="t" style="left:2917.5px;top:890.9px;font-size:33px;color:#3265cc;letter-spacing:-1.40px;">Remove</div>
<svg style="position:absolute;left:804.0px;top:1031.6px;" width="44.0" height="32.0" viewBox="0 0 44 32"><rect x="0" y="0" width="21.8" height="3.9" fill="#3060cc"/><rect x="0" y="8" width="21.8" height="4" fill="#3060cc"/><rect x="0" y="16" width="13.8" height="3.9" fill="#3060cc"/><path d="M21.2,19.5 L26.5,24.8 L36.5,14.2" fill="none" stroke="#3060cc" stroke-width="4"/></svg>
<div style="left:867.0px;top:1034.0px;width:80.0px;height:20.5px;background:#e6edfc;border-radius:10px"></div>
<svg style="position:absolute;left:1038.2px;top:1012.2px;" width="76.5" height="76.5" viewBox="0 0 76.5 76.5"><defs><clipPath id="av10761050steve"><circle cx="38.25" cy="38.25" r="35.85"/></clipPath><filter id="fav10761050steve" x="-10%" y="-10%" width="120%" height="120%"><feGaussianBlur stdDeviation="0.70"/></filter></defs><g clip-path="url(#av10761050steve)"><rect width="76.5" height="76.5" fill="#e6e3df"/><g transform="scale(1.0000)" filter="url(#fav10761050steve)"><path d="M16,80 Q22,66 39,66 Q56,66 62,80 Z" fill="#f0ebe6"/><rect x="34" y="52" width="12" height="16" fill="#dba98b"/><ellipse cx="40" cy="44" rx="16" ry="20.5" fill="#dba98b"/><path d="M20,36 Q18,10 40,8 Q64,8 63,34 Q62,40 60,44 Q58,24 40,22 Q26,24 24,44 Q20,42 20,36 Z" fill="#4a3326"/><circle cx="34.5" cy="42" r="1.6" fill="#3a2a25"/><circle cx="45.5" cy="42" r="1.6" fill="#3a2a25"/><g fill="none" stroke="#9a8a80" stroke-width="1.6"><rect x="28" y="38" width="10" height="8" rx="3"/><rect x="42" y="38" width="10" height="8" rx="3"/><path d="M38,41 H42"/></g><path d="M34,51 Q40,56 46,51 Z" fill="#fff"/></g></g><circle cx="38.25" cy="38.25" r="36.5" fill="none" stroke="#dedede" stroke-width="3.5"/></svg>
<div class="t" style="left:1132.0px;top:1029.9px;font-size:33px;color:#3a3742;letter-spacing:-0.87px;">Steve Silva</div>
<svg style="position:absolute;left:1489.2px;top:1009.0px;" width="76.0" height="76.0" viewBox="0 0 76 76"><circle cx="38.0" cy="38.0" r="36.25" fill="#fff" stroke="#dedede" stroke-width="3.5"/><g transform="translate(38.00,34.50) scale(1.0000)"><text x="0" y="5" text-anchor="middle" font-family="Liberation Sans" font-size="33" fill="#232f3e" stroke="#232f3e" stroke-width="0.7" letter-spacing="-0.4">aws</text><path d="M-27,11.5 Q0,28 21,14.5" stroke="#f79400" stroke-width="3.4" fill="none" stroke-linecap="round"/><path d="M15,12.3 L24.5,11.2 L22.2,20.5" stroke="#f79400" stroke-width="2.8" fill="none" stroke-linecap="round" stroke-linejoin="round"/></g></svg>
<svg style="position:absolute;left:1731.5px;top:1010.9px;" width="73.0" height="73.0" viewBox="0 0 73 73"><circle cx="36.5" cy="36.5" r="36.5" fill="#feeac4"/><rect x="18.30" y="18.80" width="9" height="9" rx="1.5" fill="#a8720c"/><rect x="18.30" y="32.30" width="9" height="9" rx="1.5" fill="#a8720c"/><rect x="18.30" y="45.80" width="9" height="9" rx="1.5" fill="#a8720c"/><rect x="31.85" y="18.80" width="9" height="9" rx="1.5" fill="#a8720c"/><rect x="31.85" y="32.30" width="9" height="9" rx="1.5" fill="#a8720c"/><rect x="31.85" y="45.80" width="9" height="9" rx="1.5" fill="#a8720c"/><rect x="45.40" y="18.80" width="9" height="9" rx="1.5" fill="#a8720c"/><rect x="45.40" y="32.30" width="9" height="9" rx="1.5" fill="#a8720c"/><rect x="45.40" y="45.80" width="9" height="9" rx="1.5" fill="#a8720c"/></svg>
<div class="t" style="left:1829.0px;top:1030.9px;font-size:33px;color:#3a3742;letter-spacing:-0.24px;">Iam Role</div>
<svg style="position:absolute;left:2145.0px;top:1010.9px;" width="73.0" height="73.0" viewBox="0 0 73 73"><circle cx="36.5" cy="36.5" r="36.5" fill="#feeac4"/><rect x="18.30" y="18.80" width="9" height="9" rx="1.5" fill="#a8720c"/><rect x="18.30" y="32.30" width="9" height="9" rx="1.5" fill="#a8720c"/><rect x="18.30" y="45.80" width="9" height="9" rx="1.5" fill="#a8720c"/><rect x="31.85" y="18.80" width="9" height="9" rx="1.5" fill="#a8720c"/><rect x="31.85" y="32.30" width="9" height="9" rx="1.5" fill="#a8720c"/><rect x="31.85" y="45.80" width="9" height="9" rx="1.5" fill="#a8720c"/><rect x="45.40" y="18.80" width="9" height="9" rx="1.5" fill="#a8720c"/><rect x="45.40" y="32.30" width="9" height="9" rx="1.5" fill="#a8720c"/><rect x="45.40" y="45.80" width="9" height="9" rx="1.5" fill="#a8720c"/></svg>
<svg style="position:absolute;left:2199.5px;top:1050.6px;" width="32.6" height="32.6" viewBox="0 0 32.6 32.6"><circle cx="16.3" cy="16.3" r="14.8" fill="#fff" stroke="#dedede" stroke-width="3"/><g transform="translate(16.30,14.80) scale(0.4000)"><text x="0" y="5" text-anchor="middle" font-family="Liberation Sans" font-size="33" fill="#232f3e" stroke="#232f3e" stroke-width="0.7" letter-spacing="-0.4">aws</text><path d="M-27,11.5 Q0,28 21,14.5" stroke="#f79400" stroke-width="3.4" fill="none" stroke-linecap="round"/><path d="M15,12.3 L24.5,11.2 L22.2,20.5" stroke="#f79400" stroke-width="2.8" fill="none" stroke-linecap="round" stroke-linejoin="round"/></g></svg>
<div class="t" style="left:2255.5px;top:1030.9px;font-size:33px;color:#3a3742;letter-spacing:0.32px;">Billing</div>
<div style="left:2540.9px;top:1018.7px;width:117.0px;height:57.0px;background:#fff;border:2.5px solid #dcdcdc;border-radius:29px"></div>
<svg style="position:absolute;left:2560.6px;top:1031.4px;" width="28.0" height="31.0" viewBox="0 0 28 31"><rect x="0" y="0" width="2.4" height="30.2" fill="#f5572f"/><path d="M0,0 H15.2 V3.1 H26.4 V19 H15.2 V15 H0 Z" fill="#f5572f"/></svg>
<div class="t" style="left:2614.7px;top:1032.2px;font-size:31px;color:#3a3742;">1</div>
<div style="left:2728.4px;top:1010.4px;width:147.0px;height:63.0px;border:3px solid #3265cc;border-radius:9px"></div>
<div style="left:2892.3px;top:1010.4px;width:167.4px;height:63.0px;border:3px solid #3265cc;border-radius:9px"></div>
<div class="t" style="left:2753.0px;top:1026.9px;font-size:33px;color:#3265cc;letter-spacing:0.12px;">Certify</div>
<div class="t" style="left:2917.5px;top:1026.9px;font-size:33px;color:#3265cc;letter-spacing:-1.40px;">Remove</div>
<svg style="position:absolute;left:804.0px;top:1164.0px;" width="44.0" height="34.0" viewBox="0 0 44 34"><path d="M3.6,24 A19,19 0 0 1 41.4,24 Z" fill="none" stroke="#1e8a50" stroke-width="3.8" stroke-linejoin="miter"/><circle cx="22.5" cy="4.3" r="4.2" fill="#1e8a50"/><rect x="0.4" y="28.5" width="42.6" height="4.2" fill="#1e8a50"/></svg>
<div style="left:876.0px;top:1173.0px;width:80.0px;height:20.5px;background:#e6edfc;border-radius:10px"></div>
<svg style="position:absolute;left:1038.2px;top:1145.5px;" width="76.5" height="76.5" viewBox="0 0 76.5 76.5"><defs><clipPath id="av10761183david"><circle cx="38.25" cy="38.25" r="35.85"/></clipPath><filter id="fav10761183david" x="-10%" y="-10%" width="120%" height="120%"><feGaussianBlur stdDeviation="0.70"/></filter></defs><g clip-path="url(#av10761183david)"><rect width="76.5" height="76.5" fill="#eafbe2"/><g transform="scale(1.0000)" filter="url(#fav10761183david)"><path d="M16,82 Q20,64 40,64 Q60,64 64,82 Z" fill="#1b2620"/><rect x="36" y="55" width="12" height="16" fill="#c58e6b"/><ellipse cx="42" cy="47" rx="16" ry="19.5" fill="#c58e6b"/><path d="M18,46 Q16,14 42,14 Q68,14 66,44 Q64,32 56,30 Q40,28 30,34 Q24,38 22,50 Z" fill="#1c1412"/><circle cx="36.5" cy="45" r="1.6" fill="#3a2a25"/><circle cx="47.5" cy="45" r="1.6" fill="#3a2a25"/><g fill="none" stroke="#5a5a5a" stroke-width="1.6"><rect x="30" y="41" width="10" height="8" rx="3"/><rect x="44" y="41" width="10" height="8" rx="3"/><path d="M40,44 H44"/></g><path d="M38.5,55 Q45,60 51.5,55 Z" fill="#fff"/></g></g><circle cx="38.25" cy="38.25" r="36.5" fill="none" stroke="#dedede" stroke-width="3.5"/></svg>
<div class="t" style="left:1132.0px;top:1166.8px;font-size:33px;color:#3a3742;letter-spacing:-0.68px;">David Kim</div>
<svg style="position:absolute;left:1489.2px;top:1145.0px;" width="76.0" height="76.0" viewBox="0 0 76 76"><circle cx="38.0" cy="38.0" r="36.25" fill="#fff" stroke="#dedede" stroke-width="3.5"/><g transform="translate(10.25,11.05) scale(3.4688)"><path d="M8 0C3.58 0 0 3.58 0 8c0 3.54 2.29 6.53 5.47 7.59.4.07.55-.17.55-.38 0-.19-.01-.82-.01-1.49-2.01.37-2.53-.49-2.69-.94-.09-.23-.48-.94-.82-1.13-.28-.15-.68-.52-.01-.53.63-.01 1.08.58 1.23.82.72 1.21 1.87.87 2.33.66.07-.52.28-.87.51-1.07-1.78-.2-3.64-.89-3.64-3.95 0-.87.31-1.59.82-2.15-.08-.2-.36-1.02.08-2.12 0 0 .67-.21 2.2.82.64-.18 1.32-.27 2-.27.68 0 1.36.09 2 .27 1.53-1.04 2.2-.82 2.2-.82.44 1.1.16 1.92.08 2.12.51.56.82 1.27.82 2.15 0 3.07-1.87 3.75-3.65 3.95.29.25.54.73.54 1.48 0 1.07-.01 1.93-.01 2.2 0 .21.15.46.55.38A8.013 8.013 0 0016 8c0-4.42-3.58-8-8-8z" fill="#1b1a1d"/></g></svg>
<svg style="position:absolute;left:1731.5px;top:1146.7px;" width="73.0" height="73.0" viewBox="0 0 73 73"><circle cx="36.5" cy="36.5" r="36.5" fill="#dfe9fc"/><path d="M18.2,23.4 H33 L37.8,28.4 H54.2 V50.7 H18.2 Z" fill="#142a5e" stroke="#142a5e" stroke-width="2" stroke-linejoin="round"/><rect x="22.2" y="36.8" width="26.8" height="2.8" rx="1.4" fill="#fff"/><rect x="22.2" y="41.6" width="18.8" height="2.8" rx="1.4" fill="#fff"/></svg>
<div class="t" style="left:1829.0px;top:1166.7px;font-size:33px;color:#3a3742;letter-spacing:-0.16px;">Repository</div>
<svg style="position:absolute;left:2145.0px;top:1146.7px;" width="73.0" height="73.0" viewBox="0 0 73 73"><circle cx="36.5" cy="36.5" r="36.5" fill="#dfe9fc"/><path d="M18.2,23.4 H33 L37.8,28.4 H54.2 V50.7 H18.2 Z" fill="#142a5e" stroke="#142a5e" stroke-width="2" stroke-linejoin="round"/><rect x="22.2" y="36.8" width="26.8" height="2.8" rx="1.4" fill="#fff"/><rect x="22.2" y="41.6" width="18.8" height="2.8" rx="1.4" fill="#fff"/></svg>
<svg style="position:absolute;left:2199.5px;top:1186.4px;" width="32.6" height="32.6" viewBox="0 0 32.6 32.6"><circle cx="16.3" cy="16.3" r="14.8" fill="#fff" stroke="#dedede" stroke-width="3"/><g transform="translate(7.05,7.35) scale(1.1562)"><path d="M8 0C3.58 0 0 3.58 0 8c0 3.54 2.29 6.53 5.47 7.59.4.07.55-.17.55-.38 0-.19-.01-.82-.01-1.49-2.01.37-2.53-.49-2.69-.94-.09-.23-.48-.94-.82-1.13-.28-.15-.68-.52-.01-.53.63-.01 1.08.58 1.23.82.72 1.21 1.87.87 2.33.66.07-.52.28-.87.51-1.07-1.78-.2-3.64-.89-3.64-3.95 0-.87.31-1.59.82-2.15-.08-.2-.36-1.02.08-2.12 0 0 .67-.21 2.2.82.64-.18 1.32-.27 2-.27.68 0 1.36.09 2 .27 1.53-1.04 2.2-.82 2.2-.82.44 1.1.16 1.92.08 2.12.51.56.82 1.27.82 2.15 0 3.07-1.87 3.75-3.65 3.95.29.25.54.73.54 1.48 0 1.07-.01 1.93-.01 2.2 0 .21.15.46.55.38A8.013 8.013 0 0016 8c0-4.42-3.58-8-8-8z" fill="#1b1a1d"/></g></svg>
<div class="t" style="left:2255.5px;top:1166.7px;font-size:33px;color:#3a3742;letter-spacing:0.29px;">Insulator.one</div>
<div style="left:2540.9px;top:1158.9px;width:117.0px;height:57.0px;background:#fff;border:2.5px solid #dcdcdc;border-radius:29px"></div>
<svg style="position:absolute;left:2560.6px;top:1171.6px;" width="28.0" height="31.0" viewBox="0 0 28 31"><rect x="0" y="0" width="2.4" height="30.2" fill="#f5572f"/><path d="M0,0 H15.2 V3.1 H26.4 V19 H15.2 V15 H0 Z" fill="#f5572f"/></svg>
<div class="t" style="left:2614.7px;top:1172.4px;font-size:31px;color:#3a3742;">3</div>
<div style="left:2728.4px;top:1150.6px;width:147.0px;height:63.0px;border:3px solid #3265cc;border-radius:9px"></div>
<div style="left:2892.3px;top:1150.6px;width:167.4px;height:63.0px;border:3px solid #3265cc;border-radius:9px"></div>
<div class="t" style="left:2753.0px;top:1167.1px;font-size:33px;color:#3265cc;letter-spacing:0.12px;">Certify</div>
<div class="t" style="left:2917.5px;top:1167.1px;font-size:33px;color:#3265cc;letter-spacing:-1.40px;">Remove</div>
<svg style="position:absolute;left:804.0px;top:1311.8px;" width="44.0" height="32.0" viewBox="0 0 44 32"><rect x="0" y="0" width="21.8" height="3.9" fill="#3060cc"/><rect x="0" y="8" width="21.8" height="4" fill="#3060cc"/><rect x="0" y="16" width="13.8" height="3.9" fill="#3060cc"/><path d="M21.2,19.5 L26.5,24.8 L36.5,14.2" fill="none" stroke="#3060cc" stroke-width="4"/></svg>
<div style="left:867.0px;top:1314.7px;width:80.0px;height:20.5px;background:#e6edfc;border-radius:10px"></div>
<svg style="position:absolute;left:1038.2px;top:1284.8px;" width="76.5" height="76.5" viewBox="0 0 76.5 76.5"><defs><clipPath id="av10761323kim"><circle cx="38.25" cy="38.25" r="35.85"/></clipPath><filter id="fav10761323kim" x="-10%" y="-10%" width="120%" height="120%"><feGaussianBlur stdDeviation="0.70"/></filter></defs><g clip-path="url(#av10761323kim)"><rect width="76.5" height="76.5" fill="#e8e7eb"/><g transform="scale(1.0000)" filter="url(#fav10761323kim)"><path d="M18,76 Q18,28 28,14 Q40,4 54,14 Q66,28 66,74 L58,74 Q56,36 40,34 Q26,38 26,76 Z" fill="#55372a"/><path d="M10,84 Q14,66 40,66 Q66,66 70,84 Z" fill="#efe3da"/><rect x="34" y="48" width="12" height="16" fill="#e4b39b"/><ellipse cx="40" cy="40" rx="14.5" ry="19" fill="#e4b39b"/><circle cx="34.5" cy="38" r="1.6" fill="#3a2a25"/><circle cx="45.5" cy="38" r="1.6" fill="#3a2a25"/><path d="M35,47 Q40,52 45,47 Z" fill="#fff"/></g></g><circle cx="38.25" cy="38.25" r="36.5" fill="none" stroke="#dedede" stroke-width="3.5"/></svg>
<div class="t" style="left:1132.0px;top:1306.1px;font-size:33px;color:#3a3742;letter-spacing:-0.64px;">Kim Endres</div>
<svg style="position:absolute;left:1489.2px;top:1285.0px;" width="76.0" height="76.0" viewBox="0 0 76 76"><circle cx="38.0" cy="38.0" r="36.25" fill="#fff" stroke="#dedede" stroke-width="3.5"/><g transform="translate(38.00,34.50) scale(1.0000)"><text x="0" y="5" text-anchor="middle" font-family="Liberation Sans" font-size="33" fill="#232f3e" stroke="#232f3e" stroke-width="0.7" letter-spacing="-0.4">aws</text><path d="M-27,11.5 Q0,28 21,14.5" stroke="#f79400" stroke-width="3.4" fill="none" stroke-linecap="round"/><path d="M15,12.3 L24.5,11.2 L22.2,20.5" stroke="#f79400" stroke-width="2.8" fill="none" stroke-linecap="round" stroke-linejoin="round"/></g></svg>
<svg style="position:absolute;left:1731.5px;top:1286.5px;" width="73.0" height="73.0" viewBox="0 0 73 73"><circle cx="36.5" cy="36.5" r="36.5" fill="#feeac4"/><rect x="18.30" y="18.80" width="9" height="9" rx="1.5" fill="#a8720c"/><rect x="18.30" y="32.30" width="9" height="9" rx="1.5" fill="#a8720c"/><rect x="18.30" y="45.80" width="9" height="9" rx="1.5" fill="#a8720c"/><rect x="31.85" y="18.80" width="9" height="9" rx="1.5" fill="#a8720c"/><rect x="31.85" y="32.30" width="9" height="9" rx="1.5" fill="#a8720c"/><rect x="31.85" y="45.80" width="9" height="9" rx="1.5" fill="#a8720c"/><rect x="45.40" y="18.80" width="9" height="9" rx="1.5" fill="#a8720c"/><rect x="45.40" y="32.30" width="9" height="9" rx="1.5" fill="#a8720c"/><rect x="45.40" y="45.80" width="9" height="9" rx="1.5" fill="#a8720c"/></svg>
<div class="t" style="left:1829.0px;top:1305.9px;font-size:33px;color:#3a3742;letter-spacing:-0.24px;">Iam Role</div>
<svg style="position:absolute;left:2145.0px;top:1286.5px;" width="73.0" height="73.0" viewBox="0 0 73 73"><circle cx="36.5" cy="36.5" r="36.5" fill="#feeac4"/><rect x="18.30" y="18.80" width="9" height="9" rx="1.5" fill="#a8720c"/><rect x="18.30" y="32.30" width="9" height="9" rx="1.5" fill="#a8720c"/><rect x="18.30" y="45.80" width="9" height="9" rx="1.5" fill="#a8720c"/><rect x="31.85" y="18.80" width="9" height="9" rx="1.5" fill="#a8720c"/><rect x="31.85" y="32.30" width="9" height="9" rx="1.5" fill="#a8720c"/><rect x="31.85" y="45.80" width="9" height="9" rx="1.5" fill="#a8720c"/><rect x="45.40" y="18.80" width="9" height="9" rx="1.5" fill="#a8720c"/><rect x="45.40" y="32.30" width="9" height="9" rx="1.5" fill="#a8720c"/><rect x="45.40" y="45.80" width="9" height="9" rx="1.5" fill="#a8720c"/></svg>
<svg style="position:absolute;left:2199.5px;top:1326.2px;" width="32.6" height="32.6" viewBox="0 0 32.6 32.6"><circle cx="16.3" cy="16.3" r="14.8" fill="#fff" stroke="#dedede" stroke-width="3"/><g transform="translate(16.30,14.80) scale(0.4000)"><text x="0" y="5" text-anchor="middle" font-family="Liberation Sans" font-size="33" fill="#232f3e" stroke="#232f3e" stroke-width="0.7" letter-spacing="-0.4">aws</text><path d="M-27,11.5 Q0,28 21,14.5" stroke="#f79400" stroke-width="3.4" fill="none" stroke-linecap="round"/><path d="M15,12.3 L24.5,11.2 L22.2,20.5" stroke="#f79400" stroke-width="2.8" fill="none" stroke-linecap="round" stroke-linejoin="round"/></g></svg>
<div class="t" style="left:2255.5px;top:1305.9px;font-size:33px;color:#3a3742;letter-spacing:-0.25px;">Admin</div>
<div style="left:2728.4px;top:1290.4px;width:147.0px;height:63.0px;border:3px solid #3265cc;border-radius:9px"></div>
<div style="left:2892.3px;top:1290.4px;width:167.4px;height:63.0px;border:3px solid #3265cc;border-radius:9px"></div>
<div class="t" style="left:2753.0px;top:1306.9px;font-size:33px;color:#3265cc;letter-spacing:0.12px;">Certify</div>
<div class="t" style="left:2917.5px;top:1306.9px;font-size:33px;color:#3265cc;letter-spacing:-1.40px;">Remove</div>
<div style="left:2356.0px;top:454.0px;width:412.0px;height:128.0px;background:#3d3a45;border-radius:12px;box-shadow:0 6px 24px rgba(0,0,0,0.22)"></div>
<svg style="position:absolute;left:2604.0px;top:578.0px;" width="40.0" height="24.0" viewBox="0 0 40 24"><path d="M2,2 H38 L23,20 Q20,23.5 17,20 Z" fill="#3d3a45"/></svg>
<svg style="position:absolute;left:2378.0px;top:484.0px;" width="36.0" height="36.0" viewBox="0 0 36 36"><path d="M18,1.5 C18.6,12 20.5,16.5 34.5,18 C20.5,19.5 18.6,24 18,34.5 C17.4,24 15.5,19.5 1.5,18 C15.5,16.5 17.4,12 18,1.5 Z" fill="#fff"/><circle cx="8.4" cy="27.8" r="4.6" fill="#fff"/></svg>
<div class="t" style="left:2437.0px;top:483.8px;font-size:31px;color:#fff;letter-spacing:1.07px;">Copilot recommends</div>
<div class="t" style="left:2437.0px;top:522.8px;font-size:31px;color:#fff;letter-spacing:0.72px;">removing this access</div>
</div></div></body></html>
